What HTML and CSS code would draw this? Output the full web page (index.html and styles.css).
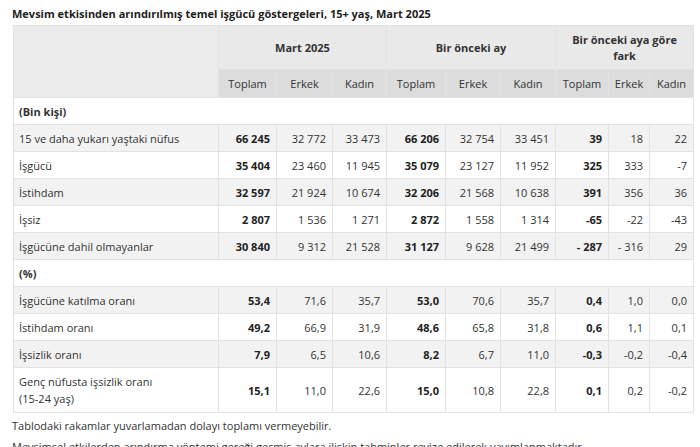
FILE: index.html
```html
<!DOCTYPE html>
<html lang="tr">
<head>
<meta charset="utf-8">
<link rel="stylesheet" href="styles.css">
</head>
<body>
<div class="page">
  <h1 class="title">Mevsim etkisinden arındırılmış temel işgücü göstergeleri, 15+ yaş, Mart 2025</h1>
  <table class="data">
    <colgroup>
      <col class="c-label">
      <col class="c-a1"><col class="c-a2"><col class="c-a3">
      <col class="c-b1"><col class="c-b2"><col class="c-b3">
      <col class="c-d1"><col class="c-d2"><col class="c-d3">
    </colgroup>
    <thead>
      <tr class="h1">
        <th class="corner" rowspan="2"></th>
        <th colspan="3">Mart 2025</th>
        <th colspan="3">Bir önceki ay</th>
        <th colspan="3">Bir önceki aya göre fark</th>
      </tr>
      <tr class="h2">
        <th>Toplam</th><th>Erkek</th><th>Kadın</th>
        <th>Toplam</th><th>Erkek</th><th>Kadın</th>
        <th>Toplam</th><th>Erkek</th><th>Kadın</th>
      </tr>
    </thead>
    <tbody>
      <tr class="section"><td colspan="10">(Bin kişi)</td></tr>
      <tr class="alt"><td>15 ve daha yukarı yaştaki nüfus</td><td class="b">66 245</td><td>32 772</td><td>33 473</td><td class="b">66 206</td><td>32 754</td><td>33 451</td><td class="b">39</td><td>18</td><td>22</td></tr>
      <tr><td>İşgücü</td><td class="b">35 404</td><td>23 460</td><td>11 945</td><td class="b">35 079</td><td>23 127</td><td>11 952</td><td class="b">325</td><td>333</td><td>-7</td></tr>
      <tr class="alt"><td>İstihdam</td><td class="b">32 597</td><td>21 924</td><td>10 674</td><td class="b">32 206</td><td>21 568</td><td>10 638</td><td class="b">391</td><td>356</td><td>36</td></tr>
      <tr><td>İşsiz</td><td class="b">2 807</td><td>1 536</td><td>1 271</td><td class="b">2 872</td><td>1 558</td><td>1 314</td><td class="b">-65</td><td>-22</td><td>-43</td></tr>
      <tr class="alt"><td>İşgücüne dahil olmayanlar</td><td class="b">30 840</td><td>9 312</td><td>21 528</td><td class="b">31 127</td><td>9 628</td><td>21 499</td><td class="b">- 287</td><td>- 316</td><td>29</td></tr>
      <tr class="section"><td colspan="10">(%)</td></tr>
      <tr class="alt"><td>İşgücüne katılma oranı</td><td class="b">53,4</td><td>71,6</td><td>35,7</td><td class="b">53,0</td><td>70,6</td><td>35,7</td><td class="b">0,4</td><td>1,0</td><td>0,0</td></tr>
      <tr><td>İstihdam oranı</td><td class="b">49,2</td><td>66,9</td><td>31,9</td><td class="b">48,6</td><td>65,8</td><td>31,8</td><td class="b">0,6</td><td>1,1</td><td>0,1</td></tr>
      <tr class="alt"><td>İşsizlik oranı</td><td class="b">7,9</td><td>6,5</td><td>10,6</td><td class="b">8,2</td><td>6,7</td><td>11,0</td><td class="b">-0,3</td><td>-0,2</td><td>-0,4</td></tr>
      <tr class="tall"><td>Genç nüfusta işsizlik oranı<br>(15-24 yaş)</td><td class="b">15,1</td><td>11,0</td><td>22,6</td><td class="b">15,0</td><td>10,8</td><td>22,8</td><td class="b">0,1</td><td>0,2</td><td>-0,2</td></tr>
    </tbody>
  </table>
  <p class="note">Tablodaki rakamlar yuvarlamadan dolayı toplamı vermeyebilir.</p>
  <p class="note">Mevsimsel etkilerden arındırma yöntemi gereği geçmiş aylara ilişkin tahminler revize edilerek yayımlanmaktadır.</p>
</div>
</body>
</html>
```
FILE: styles.css
```css
html, body {
  margin: 0;
  padding: 0;
  background: #ffffff;
}
.page {
  padding: 6px 7px 0 12px;
  font-family: "Open Sans", "Noto Sans", sans-serif;
  font-size: 11px;
  color: #333333;
}
.title {
  margin: 0 0 4px 0;
  font-size: 11px;
  font-weight: 700;
  line-height: 15px;
  color: #222222;
}
.data {
  margin-left: 1px;
  width: 680px;
  border-collapse: collapse;
  table-layout: fixed;
}
.c-label { width: 205px; }
.c-a1 { width: 58px; }
.c-a2 { width: 56px; }
.c-a3 { width: 54px; }
.c-b1 { width: 59px; }
.c-b2 { width: 55px; }
.c-b3 { width: 55px; }
.c-d1 { width: 53px; }
.c-d2 { width: 41px; }
.c-d3 { width: 44px; }
.data th, .data td {
  border: 1px solid #e2e2e2;
  padding: 0 6px;
}
.data th {
  font-weight: 400;
  text-align: center;
  color: #333333;
}
.h1 th {
  height: 43px;
  background: #e9e9e9;
  font-weight: 700;
  line-height: 16px;
  padding: 0 10px;
}
.h1 th.corner {
  background: #ebebeb;
}
.h2 th {
  height: 27px;
  background: #dcdcdc;
  padding: 0 2px;
}
.data td {
  height: 26px;
  text-align: right;
  white-space: nowrap;
}
.data td:first-child {
  text-align: left;
  padding-left: 5px;
}
.data td.b {
  font-weight: 700;
  color: #222222;
}
.section td {
  font-weight: 700;
  background: #ffffff;
}
.alt td {
  background: #f2f2f2;
}
.tall td {
  height: 44px;
  line-height: 17px;
}
.note {
  margin: 4px 0 0 0;
  line-height: 17px;
  font-size: 11px;
}
.note + .note {
  margin-top: 4px;
}
```
